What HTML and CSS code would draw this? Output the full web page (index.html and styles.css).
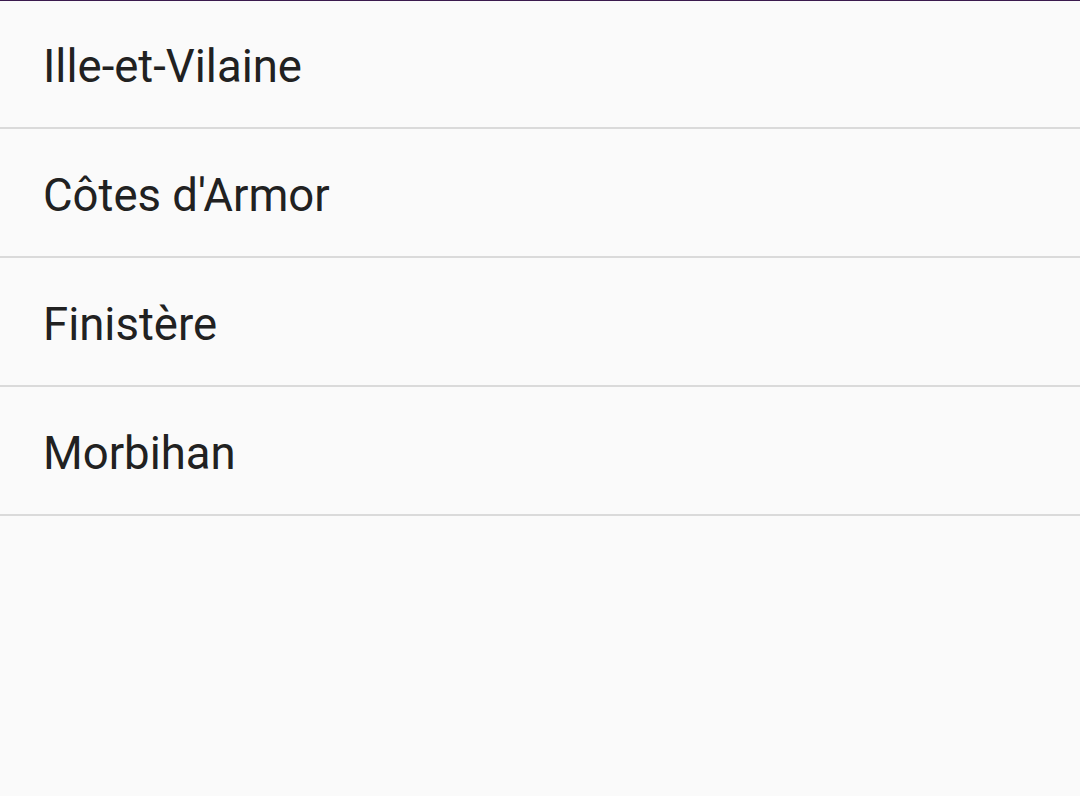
FILE: index.html
```html
<!DOCTYPE html>
<html lang="fr">
<head>
<meta charset="utf-8">
<link rel="stylesheet" href="styles.css">
</head>
<body>
<div class="topline"></div>
<ul class="list">
  <li class="item">Ille-et-Vilaine</li>
  <li class="item">Côtes d'Armor</li>
  <li class="item">Finistère</li>
  <li class="item">Morbihan</li>
</ul>
</body>
</html>
```

FILE: styles.css
```css
html, body {
  margin: 0;
  padding: 0;
  background: #fafafa;
  width: 1080px;
  height: 796px;
  overflow: hidden;
}
body {
  font-family: Roboto, "Noto Sans", sans-serif;
  color: #212121;
}
.topline {
  height: 1px;
  background: #3a1a4e;
}
.list {
  list-style: none;
  margin: 0;
  padding: 0;
}
.item {
  box-sizing: border-box;
  height: 128px;
  display: flex;
  align-items: center;
  padding: 5px 0 0 43px;
  font-size: 45.5px;
  border-bottom: 2px solid #dadada;
}
.item + .item {
  height: 129px;
}
```
